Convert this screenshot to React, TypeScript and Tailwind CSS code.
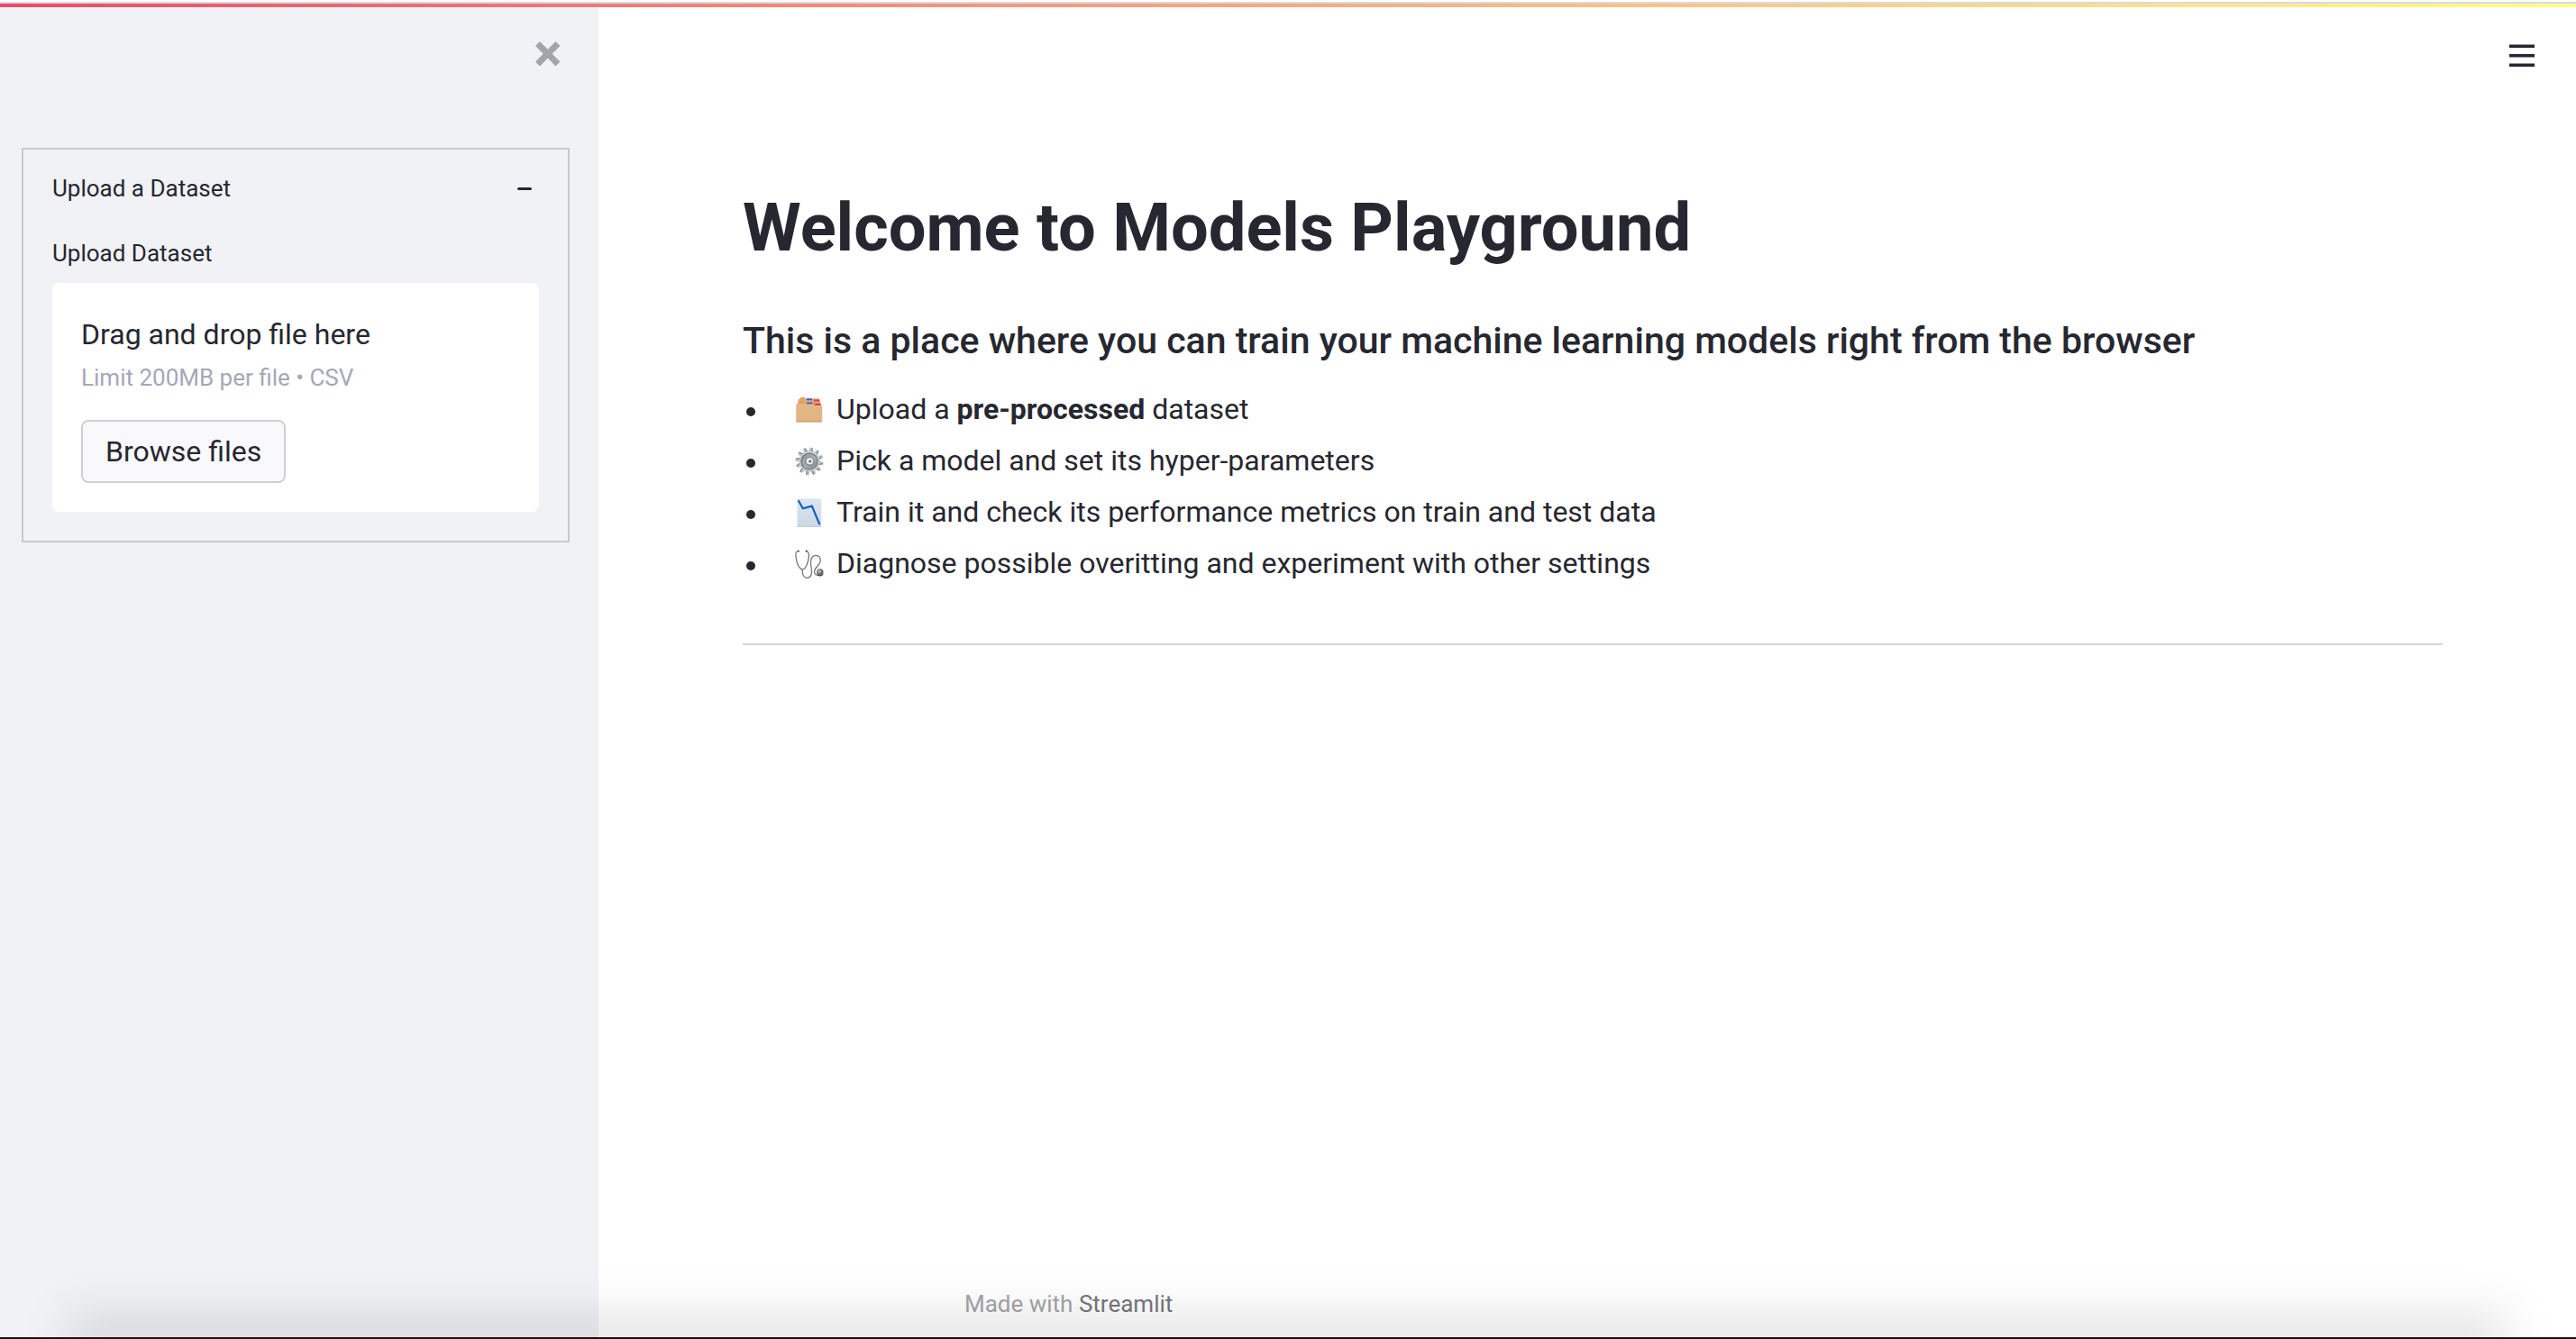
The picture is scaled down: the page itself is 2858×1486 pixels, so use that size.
import { useState, type ReactNode } from 'react';

function CloseIcon() {
  return (
    <svg viewBox="0 0 8 8" className="size-7" fill="currentColor" aria-hidden="true">
      <path d="M1.41 0l-1.41 1.41.72.72 1.78 1.81-1.78 1.78-.72.69 1.41 1.44.72-.72 1.81-1.81 1.78 1.81.69.72 1.44-1.44-.72-.69-1.81-1.78 1.81-1.81.72-.72-1.44-1.41-.69.72-1.78 1.78-1.81-1.78-.72-.72z" />
    </svg>
  );
}

function MenuIcon() {
  return (
    <svg viewBox="0 0 28 26" className="h-[26px] w-7" fill="#262730" aria-hidden="true">
      <rect x="0" y="0.5" width="28" height="3.5" />
      <rect x="0" y="11" width="28" height="3.5" />
      <rect x="0" y="21.5" width="28" height="3.5" />
    </svg>
  );
}

function FoldersIcon() {
  return (
    <svg viewBox="0 0 32 32" className="size-8" aria-hidden="true">
      <path d="M4 4l1.5-.8L7 2h3.6l1 1.2H27l2 8H2z" fill="#d9ab77" />
      <path d="M5.5 3.6L7 2h3.4l1.2 1.6z" fill="#f59638" />
      <path d="M4.6 8L6 6.2h4l1.4 1.8z" fill="#f59638" />
      <rect x="13" y="3.2" width="6" height="2" rx="0.5" fill="#3457ee" />
      <rect x="13" y="7.4" width="6.6" height="2.2" rx="0.5" fill="#3457ee" />
      <rect x="20.8" y="4.4" width="6.4" height="2.2" rx="0.5" fill="#f0393c" />
      <rect x="21.6" y="8.8" width="7" height="2.2" rx="0.5" fill="#f0393c" />
      <path d="M2 9.6h18.8l1.2 1.6h8.2V28a1.4 1.4 0 0 1-1.4 1.4H2.6A1.4 1.4 0 0 1 1.2 28V10.6z" fill="#e2b684" />
      <path d="M1.2 27.4h29v.8a1.2 1.2 0 0 1-1.2 1.2H2.4a1.2 1.2 0 0 1-1.2-1.2z" fill="#d5a874" />
    </svg>
  );
}

const TEETH = [8, 38, 68, 98, 128, 158, 188, 218, 248, 278, 308, 338];

function GearIcon() {
  return (
    <svg viewBox="0 0 32 32" className="size-8" aria-hidden="true">
      <defs>
        <linearGradient id="gear-metal" x1="0" y1="0" x2="1" y2="1">
          <stop offset="0" stopColor="#8b939a" />
          <stop offset="0.5" stopColor="#a9b0b6" />
          <stop offset="1" stopColor="#7d8489" />
        </linearGradient>
      </defs>
      {TEETH.map((angle) => (
        <g key={angle} transform={`rotate(${angle} 16 16)`}>
          <path d="M13.6 6l1-5.4h2.6l1.4 5.4z" fill="#b9c2c8" />
          <path d="M17.2 .6l1.4 5.4h-1.1L16.2 .6z" fill="#6c6f73" />
        </g>
      ))}
      <circle cx="16" cy="16" r="11.4" fill="#c4ccd1" />
      <circle cx="16" cy="16" r="9.6" fill="#6f777d" />
      <circle cx="16.2" cy="16.2" r="8.4" fill="url(#gear-metal)" />
      <circle cx="16.2" cy="16" r="5" fill="#7d8489" />
      <circle cx="16.4" cy="15.8" r="3.8" fill="#eef1f3" />
      <circle cx="16.8" cy="16" r="1.7" fill="#85796c" />
    </svg>
  );
}

function ChartIcon() {
  return (
    <svg viewBox="0 0 32 32" className="size-8" aria-hidden="true">
      <defs>
        <linearGradient id="chart-paper" x1="0" y1="0" x2="0" y2="1">
          <stop offset="0" stopColor="#dbe6ee" />
          <stop offset="1" stopColor="#cdd9e2" />
        </linearGradient>
      </defs>
      <rect x="2.4" y="0.4" width="26.8" height="31.4" fill="url(#chart-paper)" />
      <path d="M2.4 31.3h26.8" stroke="#bccad3" />
      <path d="M3.6 2.2l5.2 9 10-2.6 8.6 20.6" fill="none" stroke="#0f5ec4" strokeWidth="2.2" />
    </svg>
  );
}

function StethoscopeIcon() {
  return (
    <svg viewBox="0 0 32 32" className="size-8" fill="none" aria-hidden="true">
      <g stroke="#77787b" strokeWidth="1.3" strokeLinecap="round">
        <path d="M3.6 1.6C.6 2 .6 4.6 1 7.6c.8 6 3.2 13.4 7 14.4 3.8.4 7-8.4 7.4-14.4.2-3.4 0-5.6-2.8-6" />
        <path d="M8 22c.2 5.6 2 9.4 5.4 9.4 4.6 0 5.2-4.6 5-8.4-.2-3.6-1.2-6.2-.8-10 .4-4 2.4-6.6 5.6-6.6 3.6 0 5.4 2.6 5 6.6-.6 4.6-7.2 6.8-6.6 12 .4 3 2.6 4 5 2.4" />
      </g>
      <path d="M3 1.7l1.6-.3M11.8 1.4l1.6.3" stroke="#303134" strokeWidth="1.6" />
      <circle cx="27.8" cy="25" r="3.8" fill="#6d7073" />
      <circle cx="27.2" cy="24.2" r="1.8" fill="#b7babc" />
      <path d="M25 27.8a3.8 3.8 0 0 0 6-.8" stroke="#3b3c3f" strokeWidth="1.2" />
    </svg>
  );
}

function Step({ icon, children }: { icon: ReactNode; children: ReactNode }) {
  return (
    <li className="flex items-center">
      <span className="ml-1 mr-11 mt-1 size-2.5 shrink-0 rounded-full bg-[#262730]" />
      <span className="mr-3.5 shrink-0">{icon}</span>
      <span>{children}</span>
    </li>
  );
}

function Sidebar({ onClose }: { onClose: () => void }) {
  const [expanded, setExpanded] = useState(true);
  return (
    <aside className="w-[664px] shrink-0 bg-[#f0f2f6] px-6 pt-[38px]">
      <div className="mb-[90px] flex justify-end pr-[18px]">
        <button type="button" aria-label="Close sidebar" onClick={onClose} className="text-[#a3a4a9]">
          <CloseIcon />
        </button>
      </div>
      <section className="mr-2 border-2 border-[#c8cace] px-8 pb-8 pt-[23px] text-[26px] leading-10">
        <button
          type="button"
          aria-expanded={expanded}
          onClick={() => setExpanded(!expanded)}
          className="flex w-full items-center justify-between pr-2"
        >
          <span>Upload a Dataset</span>
          <span className="h-[3px] w-4 rounded-sm bg-[#262730]" />
        </button>
        {expanded && (
          <div className="pt-8">
            <label htmlFor="dataset">Upload Dataset</label>
            <div className="mt-[13px] rounded-lg bg-white p-8">
              <p className="text-[32px] leading-[50px]">Drag and drop file here</p>
              <p className="mt-[3px] text-[#a3a8b8]">Limit 200MB per file • CSV</p>
              <input id="dataset" type="file" accept=".csv" className="hidden" />
              <button
                type="button"
                onClick={() => document.getElementById('dataset')?.click()}
                className="mt-[27px] rounded-lg border-2 border-[#cfd0d2] bg-[#f9f9fb] px-[25px] py-2 text-[32px] leading-[50px]"
              >
                Browse files
              </button>
            </div>
          </div>
        )}
      </section>
    </aside>
  );
}

export default function App() {
  const [sidebarOpen, setSidebarOpen] = useState(true);
  return (
    <div className="relative flex min-h-screen flex-col overflow-hidden bg-white font-['Roboto',sans-serif] text-[#262730]">
      <div className="mt-0.5 h-0.5 bg-[#d9dade]" />
      <div className="h-1 bg-linear-to-r from-[#e84a6b] to-[#fffd8c]" />
      <div className="flex grow">
        {sidebarOpen && <Sidebar onClose={() => setSidebarOpen(false)} />}
        <div className="flex min-w-0 grow flex-col">
          <header className="flex justify-end pr-[46px] pt-[41px]">
            <button type="button" aria-label="Main menu">
              <MenuIcon />
            </button>
          </header>
          <main className="grow pl-40 pr-[148px] pt-[133px]">
            <h1 className="text-[74px] font-bold leading-[90px]">Welcome to Models Playground</h1>
            <h3 className="mt-[55px] text-[41px] font-medium leading-[50px]">
              This is a place where you can train your machine learning models right from the browser
            </h3>
            <ul className="mt-[23px] text-[32px] leading-[57px]">
              <Step icon={<FoldersIcon />}>
                Upload a <strong className="font-bold">pre-processed</strong> dataset
              </Step>
              <Step icon={<GearIcon />}>Pick a model and set its hyper-parameters</Step>
              <Step icon={<ChartIcon />}>Train it and check its performance metrics on train and test data</Step>
              <Step icon={<StethoscopeIcon />}>Diagnose possible overitting and experiment with other settings</Step>
            </ul>
            <hr className="mt-[60px] border-t-2 border-[#d6d6d9]" />
          </main>
          <footer className="pb-[17px] pl-[406px] text-[26px] leading-10 text-[#a3a4a9]">
            Made with{' '}
            <a href="#streamlit" className="text-[#76777c]">
              Streamlit
            </a>
          </footer>
        </div>
      </div>
      {/* Soft shade along the bottom edge of the window */}
      <div className="pointer-events-none absolute inset-x-[76px] -bottom-24 h-32 bg-black/9 blur-[24px]" />
      <div className="relative h-0.5 bg-[#1c1012]" />
    </div>
  );
}
